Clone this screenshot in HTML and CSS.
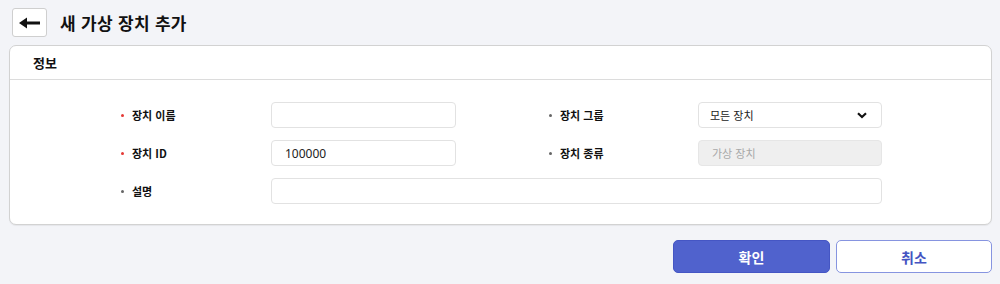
FILE: index.html
```html
<!DOCTYPE html>
<html lang="ko">
<head>
<meta charset="utf-8">
<title>새 가상 장치 추가</title>
<link rel="stylesheet" href="styles.css">
</head>
<body>
<header class="page-header">
  <button class="back-btn" type="button" aria-label="뒤로">
    <svg width="22" height="12" viewBox="0 0 22 12"><path d="M0 6 L8 0.5 L8 4.5 L21 4.5 L21 7.5 L8 7.5 L8 11.5 Z" fill="#111"/></svg>
  </button>
  <h1 class="title">새 가상 장치 추가</h1>
</header>
<section class="card">
  <div class="card-head">정보</div>
  <div class="form">
    <label class="label req">장치 이름</label>
    <div class="field"><input class="input" type="text"></div>
    <div class="spacer"></div>
    <label class="label">장치 그룹</label>
    <div class="field select">
      <span>모든 장치</span>
      <svg width="10" height="7" viewBox="0 0 10 7"><path d="M1 1.2 L5 5 L9 1.2" fill="none" stroke="#111" stroke-width="2.2"/></svg>
    </div>

    <label class="label req">장치 ID</label>
    <div class="field"><input class="input" type="text" value="100000"></div>
    <div class="spacer"></div>
    <label class="label">장치 종류</label>
    <div class="field disabled">가상 장치</div>

    <label class="label">설명</label>
    <div class="field wide"><input class="input" type="text"></div>
  </div>
</section>
<div class="actions">
  <button class="btn primary" type="button">확인</button>
  <button class="btn secondary" type="button">취소</button>
</div>
</body>
</html>
```
FILE: styles.css
```css
* { box-sizing: border-box; }
html, body { margin: 0; padding: 0; }
body {
  background: #f3f4f8;
  font-family: "Noto Sans CJK KR", "Noto Sans", sans-serif;
  color: #111;
  width: 1000px;
  height: 284px;
  overflow: hidden;
}
.page-header {
  display: flex;
  gap: 13px;
  padding: 8px 12px 0 12px;
  height: 45px;
  align-items: flex-start;
}
.back-btn {
  width: 35px;
  height: 29px;
  background: #fff;
  border: 1px solid #cfcfcf;
  border-radius: 3px;
  padding: 0;
  display: flex;
  align-items: center;
  justify-content: center;
}
.title {
  margin: 0;
  font-size: 17px;
  font-weight: 700;
  line-height: 29px;
  letter-spacing: 0.3px;
}
.card {
  margin-left: 9px;
  width: 983px;
  height: 180px;
  background: #fff;
  border: 1px solid #d2d2d2;
  border-radius: 7px;
  box-shadow: 0 1px 1px rgba(0,0,0,0.06);
}
.card-head {
  height: 34px;
  border-bottom: 1px solid #dcdcdc;
  padding-left: 23px;
  font-size: 13px;
  font-weight: 700;
  line-height: 34px;
}
.form {
  display: grid;
  grid-template-columns: 150px 185px 93px 149px 184px;
  grid-auto-rows: 26px;
  row-gap: 12px;
  padding: 22px 0 0 111px;
  align-items: center;
}
.label {
  font-size: 11px;
  font-weight: 700;
  display: flex;
  align-items: center;
  color: #111;
}
.label::before {
  content: "";
  width: 3px;
  height: 3px;
  border-radius: 50%;
  background: #666;
  margin-right: 8px;
}
.label.req::before { background: #e53935; }
.field {
  height: 26px;
  border: 1px solid #e2e2e2;
  border-radius: 4px;
  background: #fff;
  display: flex;
  align-items: center;
}
.field.wide { grid-column: 2 / 6; }
.input {
  border: 0;
  outline: 0;
  width: 100%;
  height: 100%;
  background: transparent;
  padding: 0 13px;
  font-family: "Noto Sans", "Noto Sans CJK KR", sans-serif;
  font-size: 12px;
  color: #222;
}
.select {
  justify-content: space-between;
  padding: 0 14px 0 11px;
  font-size: 11px;
  color: #222;
}
.disabled {
  background: #efefef;
  border-color: #e6e6e6;
  padding-left: 13px;
  font-size: 11px;
  color: #a8a8a8;
}
.actions {
  display: flex;
  justify-content: flex-end;
  gap: 6px;
  padding: 15px 8px 0 0;
}
.btn {
  width: 157px;
  height: 33px;
  border-radius: 5px;
  font-family: "Noto Sans CJK KR", sans-serif;
  font-size: 14px;
  font-weight: 700;
  padding: 0;
}
.primary {
  background: #5062cd;
  border: 1px solid #4556c4;
  color: #fff;
}
.secondary {
  width: 156px;
  background: #fff;
  border: 1.5px solid #8694e0;
  color: #4454c2;
}
```
